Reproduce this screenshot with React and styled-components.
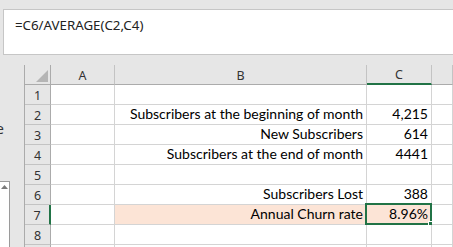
import React from 'react';
import styled, { createGlobalStyle } from 'styled-components';

const Global = createGlobalStyle`
  html, body { margin: 0; padding: 0; }
  body { width: 453px; height: 247px; overflow: hidden; background: #e6e6e6; }
  * { box-sizing: border-box; }
`;

const GREEN = '#217346';

const Page = styled.div`
  width: 453px;
  height: 247px;
  overflow: hidden;
  display: flex;
  flex-direction: column;
  background: #e6e6e6;
`;

const FormulaArea = styled.div`
  height: 65px;
  padding: 9px 0 0 3px;
  flex: none;
`;

const FormulaBox = styled.div`
  height: 46px;
  background: #fff;
  border: 1px solid #c6c6c6;
  border-right: none;
  padding: 5px 0 0 11px;
  font-family: "Noto Sans", "Open Sans", sans-serif;
  font-size: 13.3px;
  line-height: 20px;
  color: #222;
  white-space: nowrap;
`;

const Main = styled.div`
  flex: 1;
  display: flex;
  min-height: 0;
`;

const LeftPanel = styled.div`
  width: 24px;
  flex: none;
  display: flex;
  flex-direction: column;
  overflow: hidden;
`;

const PartialText = styled.div`
  margin: 55px 0 0 -4px;
  height: 18px;
  font-family: "Noto Sans", sans-serif;
  font-size: 14px;
  line-height: 18px;
  color: #333;
`;

const ScrollBox = styled.div`
  margin-top: 43px;
  width: 10px;
  flex: 1;
  background: #fff;
  border-top: 1px solid #9a9a9a;
  border-right: 1px solid #9a9a9a;
  display: flex;
  justify-content: flex-start;
  padding: 3px 0 0 1px;
`;

const Sheet = styled.div`
  flex: 1;
  display: grid;
  grid-template-columns: 26px 64px 252px 65px 1fr;
  grid-auto-rows: 20px;
  border-left: 1px solid #ababab;
  align-content: start;
`;

const HeadCell = styled.div`
  background: #e6e6e6;
  border-right: 1px solid ${p => (p.$corner ? '#ababab' : '#c3c3c3')};
  border-bottom: ${p => (p.$active ? `2px solid ${GREEN}` : '1px solid #ababab')};
  display: flex;
  align-items: center;
  justify-content: center;
  font-family: "Noto Sans", "Open Sans", sans-serif;
  font-size: 12.5px;
  color: #333;
  padding-top: 1px;
`;

const Corner = styled(HeadCell)`
  align-items: flex-end;
  justify-content: flex-end;
  padding: 0 2px 2px 0;
`;

const RowHead = styled.div`
  background: #e6e6e6;
  border-right: ${p => (p.$active ? `2px solid ${GREEN}` : '1px solid #ababab')};
  border-bottom: 1px solid #c3c3c3;
  display: flex;
  align-items: center;
  justify-content: center;
  font-family: "Noto Sans", "Open Sans", sans-serif;
  font-size: 12.5px;
  color: #333;
  padding-top: 1px;
`;

const Cell = styled.div`
  position: relative;
  background: ${p => (p.$fill ? '#fce4d6' : '#fff')};
  border-right: 1px solid ${p => (p.$fillRight ? '#fce4d6' : '#d4d4d4')};
  border-bottom: 1px solid #d4d4d4;
  display: flex;
  align-items: flex-end;
  justify-content: flex-end;
  padding: 0 3px 1px 0;
  font-family: Lato, "Liberation Sans", sans-serif;
  font-size: 14px;
  line-height: 18px;
  color: #000;
  white-space: nowrap;
`;

const Selection = styled.div`
  position: absolute;
  top: -2px;
  left: -2px;
  right: -1px;
  bottom: -1px;
  border: 2px solid ${GREEN};
  pointer-events: none;
`;

const FillHandle = styled.div`
  position: absolute;
  right: -5px;
  bottom: -5px;
  width: 7px;
  height: 7px;
  background: ${GREEN};
  border: 1px solid #fff;
`;

const rows = [
  ['', ''],
  ['Subscribers at the beginning of month', '4,215'],
  ['New Subscribers', '614'],
  ['Subscribers at the end of month', '4441'],
  ['', ''],
  ['Subscribers Lost', '388'],
  ['Annual Churn rate', '8.96%'],
  ['', ''],
  ['', ''],
];

export default function App() {
  return (
    <Page>
      <Global />
      <FormulaArea>
        <FormulaBox>=C6/AVERAGE(C2,C4)</FormulaBox>
      </FormulaArea>
      <Main>
        <LeftPanel>
          <PartialText>e</PartialText>
          <ScrollBox>
            <svg width="7" height="4" viewBox="0 0 7 4">
              <polygon points="0,4 3.5,0 7,4" fill="#7a7a7a" />
            </svg>
          </ScrollBox>
        </LeftPanel>
        <Sheet>
          <Corner $corner>
            <svg width="12" height="12" viewBox="0 0 12 12">
              <polygon points="12,0 12,12 0,12" fill="#b5b5b5" />
            </svg>
          </Corner>
          <HeadCell>A</HeadCell>
          <HeadCell>B</HeadCell>
          <HeadCell $active>C</HeadCell>
          <HeadCell />
          {rows.map(([label, value], i) => {
            const n = i + 1;
            const active = n === 7;
            return (
              <React.Fragment key={n}>
                <RowHead $active={active}>{n < 9 ? n : ''}</RowHead>
                <Cell />
                <Cell $fill={active} $fillRight={active}>{label}</Cell>
                <Cell $fill={active}>
                  {value}
                  {active && (
                    <Selection>
                      <FillHandle />
                    </Selection>
                  )}
                </Cell>
                <Cell />
              </React.Fragment>
            );
          })}
        </Sheet>
      </Main>
    </Page>
  );
}
